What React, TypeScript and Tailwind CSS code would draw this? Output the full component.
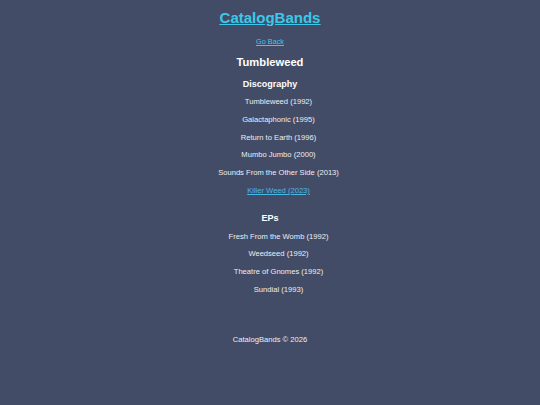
const DISCOGRAPHY = [
  'Tumbleweed (1992)',
  'Galactaphonic (1995)',
  'Return to Earth (1996)',
  'Mumbo Jumbo (2000)',
  'Sounds From the Other Side (2013)',
]

const EPS = [
  'Fresh From the Womb (1992)',
  'Weedseed (1992)',
  'Theatre of Gnomes (1992)',
  'Sundial (1993)',
]

export default function App() {
  return (
    <div
      className="w-[540px] h-[405px] bg-[#434c66] text-[#eceef3] flex flex-col items-center"
      style={{ fontFamily: '"Liberation Sans", Arial, sans-serif' }}
    >
      <h1 className="mt-[9px] text-[15px] leading-[18px] font-bold text-[#3cc8e8] underline">
        <a href="#">CatalogBands</a>
      </h1>

      <a href="#" className="mt-[10px] text-[7.3px] leading-[10px] text-[#3cc8e8] underline">
        Go Back
      </a>

      <h2 className="mt-[8px] text-[11.2px] leading-[14px] font-bold text-white">Tumbleweed</h2>

      <h3 className="mt-[9px] text-[9px] leading-[12px] font-bold text-white">Discography</h3>
      {/* list keeps its left indent, so the centred rows sit a little right */}
      <ul className="mt-[3px] pl-[17px] flex flex-col items-center">
        {DISCOGRAPHY.map((album) => (
          <li key={album} className="text-[7.6px] leading-[17.8px]">
            {album}
          </li>
        ))}
        <li className="text-[7.6px] leading-[17.8px]">
          <a href="#" className="text-[#47b8e6] underline">Killer Weed (2023)</a>
        </li>
      </ul>

      <h3 className="mt-[12px] text-[9px] leading-[12px] font-bold text-white">EPs</h3>
      <ul className="mt-[4px] pl-[17px] flex flex-col items-center">
        {EPS.map((ep) => (
          <li key={ep} className="text-[7.6px] leading-[17.7px]">
            {ep}
          </li>
        ))}
      </ul>

      <footer className="mt-[36px] text-[7.6px] leading-[10px]">CatalogBands © 2026</footer>
    </div>
  )
}
